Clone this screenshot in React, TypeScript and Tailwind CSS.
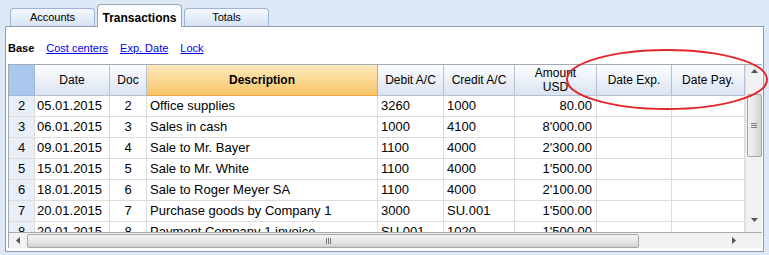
import React from 'react';

// Column widths (px) include the 1px right border of each cell.
const COLS = [
  { key: 'row', w: 'w-[27px]' },
  { key: 'date', w: 'w-[75px]' },
  { key: 'doc', w: 'w-[37px]' },
  { key: 'desc', w: 'w-[231px]' },
  { key: 'debit', w: 'w-[66px]' },
  { key: 'credit', w: 'w-[71px]' },
  { key: 'amount', w: 'w-[82px]' },
  { key: 'dexp', w: 'w-[75px]' },
  { key: 'dpay', w: 'w-[73px]' },
];

const ROWS = [
  ['2', '05.01.2015', '2', 'Office supplies', '3260', '1000', '80.00'],
  ['3', '06.01.2015', '3', 'Sales in cash', '1000', '4100', "8'000.00"],
  ['4', '09.01.2015', '4', 'Sale to Mr. Bayer', '1100', '4000', "2'300.00"],
  ['5', '15.01.2015', '5', 'Sale to Mr. White', '1100', '4000', "1'500.00"],
  ['6', '18.01.2015', '6', 'Sale to Roger Meyer SA', '1100', '4000', "2'100.00"],
  ['7', '20.01.2015', '7', 'Purchase goods by Company 1', '3000', 'SU.001', "1'500.00"],
  ['8', '20.01.2015', '8', 'Payment Company 1 invoice', 'SU.001', '1020', "1'500.00"],
];

const HEAD = 'flex items-center justify-center border-r border-b border-[#b4c1d3] bg-gradient-to-b from-[#fdfeff] to-[#dae3f0] text-[12px] leading-[14px] text-black';
const CELL = 'h-[21px] flex items-center border-r border-b border-[#dcdcdc] text-[13px] text-black whitespace-nowrap overflow-hidden';

function Tab({ label, active }: { label: string; active?: boolean }) {
  if (active) {
    return (
      <div className="w-[85px] h-[23px] -mb-px z-10 flex items-start justify-center pt-[4px] rounded-t-[4px] border border-b-0 border-[#9aa3ae] bg-gradient-to-b from-[#fbfcfd] to-white text-[12px] font-bold text-black">
        {label}
      </div>
    );
  }
  return (
    <div className="w-[85px] h-[18px] flex items-center justify-center rounded-t-[4px] border border-b-0 border-[#9db4d4] bg-gradient-to-b from-[#f5f9fe] to-[#d6e3f4] text-[11px] text-black">
      {label}
    </div>
  );
}

function Arrow({ dir }: { dir: 'up' | 'down' | 'left' | 'right' }) {
  const pts = {
    up: '0,4 7,4 3.5,0',
    down: '0,0 7,0 3.5,4',
    left: '4,0 4,7 0,3.5',
    right: '0,0 0,7 4,3.5',
  }[dir];
  const vert = dir === 'up' || dir === 'down';
  return (
    <svg width={vert ? 7 : 4} height={vert ? 4 : 7} viewBox={vert ? '0 0 7 4' : '0 0 4 7'}>
      <polygon points={pts} fill="#555" />
    </svg>
  );
}

export default function App() {
  return (
    <div className="w-[769px] h-[255px] relative overflow-hidden bg-[#dde9f6] font-['Liberation_Sans',Arial,sans-serif]">
      {/* tabs */}
      <div className="h-[26px] flex items-end gap-[2px] pl-[10px]">
        <Tab label="Accounts" />
        <Tab label="Transactions" active />
        <Tab label="Totals" />
      </div>

      {/* panel */}
      <div className="ml-[5px] w-[759px] h-[226px] bg-white border border-[#8e9cb0] flex flex-col">
        <div className="h-[37px] flex items-center gap-[12px] pl-[2px] pt-[5px] text-[11px]">
          <span className="font-bold text-black">Base</span>
          <span className="text-[#0000ee] underline">Cost centers</span>
          <span className="text-[#0000ee] underline">Exp. Date</span>
          <span className="text-[#0000ee] underline">Lock</span>
        </div>

        <div className="ml-[2px] w-[754px] flex flex-col">
          <div className="h-[168px] flex border-t border-[#a3a9b2]">
            {/* table */}
            <div className="w-[737px] flex flex-col overflow-hidden border-l border-[#a3a9b2]">
              <div className="h-[31px] shrink-0 flex">
                <div className="w-[26px] border-r border-b border-[#9bb6dc] bg-[#aac7ee]" />
                <div className={`${HEAD} w-[75px]`}>Date</div>
                <div className={`${HEAD} w-[37px]`}>Doc</div>
                <div className="w-[231px] flex items-center justify-center border-r border-b border-[#eea43c] bg-gradient-to-b from-[#fde9ba] to-[#f6c466] text-[12px] font-bold text-black">
                  Description
                </div>
                <div className={`${HEAD} w-[66px]`}>Debit A/C</div>
                <div className={`${HEAD} w-[71px]`}>Credit A/C</div>
                <div className={`${HEAD} w-[82px] flex-col`}>
                  <span>Amount</span>
                  <span>USD</span>
                </div>
                <div className={`${HEAD} w-[75px]`}>Date Exp.</div>
                <div className={`${HEAD} w-[73px]`}>Date Pay.</div>
              </div>
              {ROWS.map(r => (
                <div key={r[0]} className="flex shrink-0">
                  <div className={`${CELL} w-[26px] justify-center bg-[#e9eff8] text-[12px]`}>{r[0]}</div>
                  <div className={`${CELL} w-[75px] pl-[2px]`}>{r[1]}</div>
                  <div className={`${CELL} w-[37px] justify-center`}>{r[2]}</div>
                  <div className={`${CELL} w-[231px] pl-[3px]`}>{r[3]}</div>
                  <div className={`${CELL} w-[66px] pl-[3px]`}>{r[4]}</div>
                  <div className={`${CELL} w-[71px] pl-[3px]`}>{r[5]}</div>
                  <div className={`${CELL} w-[82px] justify-end pr-[4px]`}>{r[6]}</div>
                  <div className={`${CELL} w-[75px]`} />
                  <div className={`${CELL} w-[73px]`} />
                </div>
              ))}
            </div>

            {/* vertical scrollbar */}
            <div className="w-[17px] flex flex-col items-center bg-[#f1f1f1] border-l border-[#e3e3e3]">
              <div className="h-[29px] flex items-start pt-[4px]">
                <Arrow dir="up" />
              </div>
              <div className="w-[15px] h-[63px] rounded-[2px] border border-[#a6a6a6] bg-gradient-to-r from-[#f3f3f3] via-[#e6e6e6] to-[#cfcfcf] flex flex-col items-center justify-center gap-[1px]">
                <div className="w-[6px] h-px bg-[#777]" />
                <div className="w-[6px] h-px bg-[#777]" />
                <div className="w-[6px] h-px bg-[#777]" />
              </div>
              <div className="flex-1" />
              <div className="h-[14px] flex items-start">
                <Arrow dir="down" />
              </div>
            </div>
          </div>

          {/* horizontal scrollbar */}
          <div className="h-[16px] flex border-t border-[#a3a9b2]">
            <div className="w-[737px] flex items-center bg-[#f1f1f1] border-l border-[#a3a9b2]">
              <div className="w-[18px] flex justify-center">
                <Arrow dir="left" />
              </div>
              <div className="w-[612px] h-[14px] rounded-[2px] border border-[#a6a6a6] bg-gradient-to-b from-[#f5f5f5] via-[#e8e8e8] to-[#d2d2d2] flex items-center justify-center gap-[1px] pr-[10px]">
                <div className="w-px h-[6px] bg-[#777]" />
                <div className="w-px h-[6px] bg-[#777]" />
                <div className="w-px h-[6px] bg-[#777]" />
              </div>
              <div className="flex-1 flex justify-end pr-[9px]">
                <Arrow dir="right" />
              </div>
            </div>
            <div className="w-[17px] bg-[#f1f1f1]" />
          </div>
        </div>
      </div>

      {/* red annotation ellipse */}
      <svg className="absolute inset-0 pointer-events-none" width="769" height="255">
        <ellipse cx="667" cy="79.5" rx="100" ry="29.5" fill="none" stroke="#e3262b" strokeWidth="2" />
      </svg>
    </div>
  );
}
